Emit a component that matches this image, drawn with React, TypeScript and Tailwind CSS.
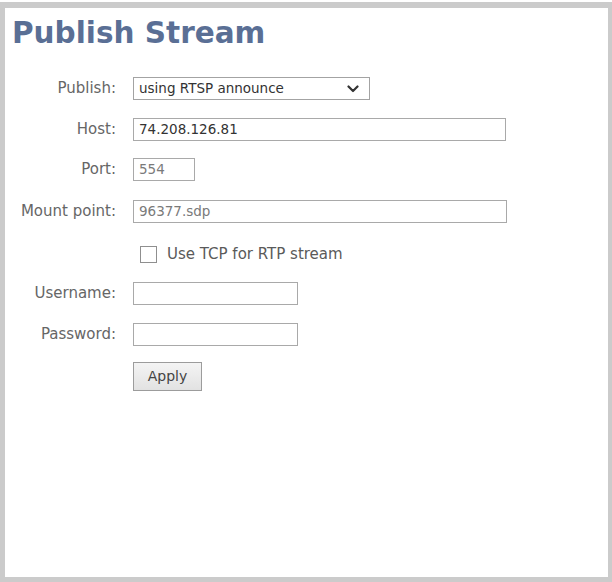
import { ReactNode } from 'react'

const font = { fontFamily: '"DejaVu Sans", Verdana, sans-serif' }

function Row({ label, children, className }: { label?: string; children: ReactNode; className: string }) {
  return (
    <div className={`flex items-center ${className}`}>
      <div className="w-[112px] shrink-0 pr-px text-right text-[15px] leading-[23px] text-[#666]">{label}</div>
      <div className="ml-[16px] flex items-center">{children}</div>
    </div>
  )
}

function TextBox({ value, width, dim }: { value?: string; width: string; dim?: boolean }) {
  return (
    <div
      className={`${width} flex h-[23px] items-center border border-[#a9a9a9] bg-white px-[5px] text-[13.5px] ${
        dim ? 'text-[#7a7a7a]' : 'text-[#333]'
      }`}
    >
      {value}
    </div>
  )
}

export default function App() {
  return (
    <div className="h-[582px] w-[612px] bg-white pt-[2px]" style={font}>
      <div className="h-[580px] w-full border-[5px] border-t-[6px] border-r-[4px] border-[#cbcbcb] bg-white">
        <h1 className="ml-[7px] mt-[8px] text-[29.5px] font-bold leading-[34px] text-[#5a6f95]">Publish Stream</h1>

        <Row label="Publish:" className="mt-[27px]">
          <div className="flex h-[23px] w-[237px] items-center justify-between border border-[#a3a3a3] bg-white pl-[5px] pr-[10px] text-[13.5px] text-[#333]">
            <span>using RTSP announce</span>
            <svg width="12" height="8" viewBox="0 0 12 8" fill="none">
              <path d="M1.5 1.5 L6 6 L10.5 1.5" stroke="#333" strokeWidth="2.2" strokeLinecap="round" strokeLinejoin="round" />
            </svg>
          </div>
        </Row>

        <Row label="Host:" className="mt-[18px]">
          <TextBox value="74.208.126.81" width="w-[373px]" />
        </Row>

        <Row label="Port:" className="mt-[17px]">
          <TextBox value="554" width="w-[62px]" dim />
        </Row>

        <Row label="Mount point:" className="mt-[19px]">
          <TextBox value="96377.sdp" width="w-[374px]" dim />
        </Row>

        <div className="mt-[21px] flex h-[20px] items-center pl-[135px]">
          <span className="h-[17px] w-[17px] border border-[#8f8f8f] bg-white" />
          <span className="ml-[10px] text-[15px] text-[#5a5a5a]">Use TCP for RTP stream</span>
        </div>

        <Row label="Username:" className="mt-[18px]">
          <TextBox width="w-[165px]" />
        </Row>

        <Row label="Password:" className="mt-[18px]">
          <TextBox width="w-[165px]" />
        </Row>

        <div className="mt-[16px] pl-[128px]">
          <button className="flex h-[29px] w-[69px] items-center justify-center border border-[#9c9c9c] bg-gradient-to-b from-[#f4f4f4] to-[#e2e2e2] text-[14px] text-[#444]">
            Apply
          </button>
        </div>
      </div>
    </div>
  )
}
